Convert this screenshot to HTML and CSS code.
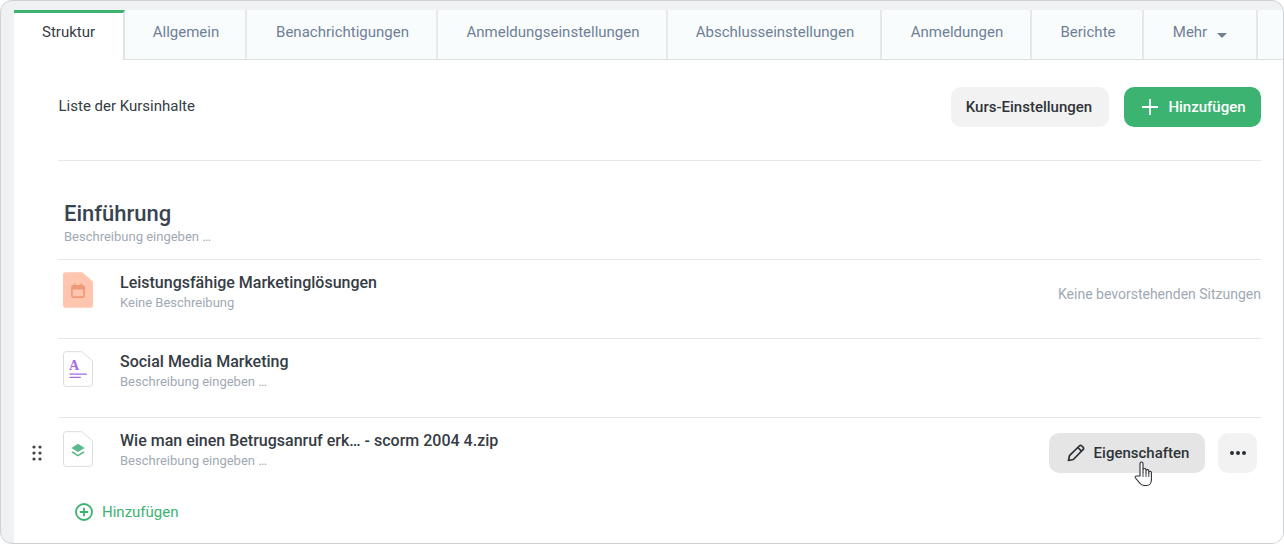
FILE: index.html
```html
<!DOCTYPE html>
<html lang="de">
<head>
<meta charset="utf-8">
<title>Kursinhalte</title>
<link rel="stylesheet" href="styles.css">
</head>
<body>
<div class="frame">
  <nav class="tabs">
    <a class="tab active w110">Struktur</a>
    <a class="tab w123">Allgemein</a>
    <a class="tab w190">Benachrichtigungen</a>
    <a class="tab w230">Anmeldungseinstellungen</a>
    <a class="tab w215">Abschlusseinstellungen</a>
    <a class="tab w150">Anmeldungen</a>
    <a class="tab w112">Berichte</a>
    <a class="tab w114">Mehr <svg class="caret" width="10" height="5" viewBox="0 0 10 5"><path d="M0 0h10L5 5z" fill="#6f7f95"/></svg></a>
    <span class="tab-rest"></span>
  </nav>
  <main class="content">
    <header class="top">
      <h2 class="list-title">Liste der Kursinhalte</h2>
      <div class="top-actions">
        <button class="btn btn-grey">Kurs-Einstellungen</button>
        <button class="btn btn-green"><svg width="18" height="18" viewBox="0 0 18 18"><path d="M9 1v16M1 9h16" stroke="#fff" stroke-width="1.8" fill="none"/></svg>Hinzufügen</button>
      </div>
    </header>
    <section class="section">
      <h1 class="section-title">Einführung</h1>
      <p class="desc section-desc">Beschreibung eingeben …</p>
    </section>
    <div class="row">
      <svg class="file" width="30" height="36" viewBox="0 0 32 38">
        <path d="M3 0h17.500L32 10v25a3 3 0 0 1-3 3H3a3 3 0 0 1-3-3V3a3 3 0 0 1 3-3z" fill="#ffc5ae"/>
        <rect x="9.500" y="14.500" width="13" height="12" rx="1.500" fill="none" stroke="#ee9a78" stroke-width="1.800"/>
        <path d="M9.500 18.500h13V16a1.500 1.500 0 0 0-1.500-1.500H11A1.500 1.500 0 0 0 9.500 16z" fill="#ee9a78"/>
        <path d="M12.500 12v3.500M19.500 12v3.500" stroke="#ee9a78" stroke-width="1.600"/>
      </svg>
      <div class="info">
        <div class="name">Leistungsfähige Marketinglösungen</div>
        <p class="desc">Keine Beschreibung</p>
      </div>
      <span class="note">Keine bevorstehenden Sitzungen</span>
    </div>
    <div class="row">
      <svg class="file" width="30" height="36" viewBox="0 0 32 38">
        <path d="M3.500.5h16.500L31.500 10.500V34.500a3 3 0 0 1-3 3h-25a3 3 0 0 1-3-3V3.500a3 3 0 0 1 3-3z" fill="#fff" stroke="#d8dbde"/>
        <text class="file-letter" x="6.500" y="20.500">A</text>
        <path d="M7 24.500h18.500M7 28h12" stroke="#a56be0" stroke-width="1.400"/>
      </svg>
      <div class="info">
        <div class="name">Social Media Marketing</div>
        <p class="desc">Beschreibung eingeben …</p>
      </div>
    </div>
    <div class="row">
      <svg class="drag" width="10" height="16" viewBox="0 0 10 16"><g fill="#3d4349"><circle cx="2" cy="2" r="1.600"/><circle cx="8" cy="2" r="1.600"/><circle cx="2" cy="8" r="1.600"/><circle cx="8" cy="8" r="1.600"/><circle cx="2" cy="14" r="1.600"/><circle cx="8" cy="14" r="1.600"/></g></svg>
      <svg class="file" width="30" height="36" viewBox="0 0 32 38">
        <path d="M3.500.5h16.500L31.500 10.500V34.500a3 3 0 0 1-3 3h-25a3 3 0 0 1-3-3V3.500a3 3 0 0 1 3-3z" fill="#fff" stroke="#d8dbde"/>
        <path d="M16 13.500L23 18l-7 4.300L9 18z" fill="#5cb98a"/>
        <path d="M10.300 21.500l5.700 3.500 5.700-3.500L23 22.600l-7 4.500-7-4.500z" fill="#5cb98a"/>
      </svg>
      <div class="info">
        <div class="name">Wie man einen Betrugsanruf erk… - scorm 2004 4.zip</div>
        <p class="desc">Beschreibung eingeben …</p>
      </div>
      <div class="row-actions">
        <button class="btn btn-hover"><svg width="18" height="18" viewBox="0 0 18 18"><path d="M1.500 16.500l1-4.800L12.300 2a1.800 1.800 0 0 1 2.500 0l1.200 1.200a1.800 1.800 0 0 1 0 2.500L6.300 15.500zM10.800 3.500l3.700 3.700" fill="none" stroke="#2b3035" stroke-width="1.700" stroke-linejoin="round"/></svg>Eigenschaften</button>
        <button class="btn btn-more" aria-label="Mehr"><svg width="16" height="4" viewBox="0 0 16 4"><g fill="#2b3035"><circle cx="2" cy="2" r="2"/><circle cx="8" cy="2" r="2"/><circle cx="14" cy="2" r="2"/></g></svg></button>
      </div>
      <svg class="cursor" width="20" height="26" viewBox="0 0 20 26"><path d="M6 15V2.500a1.500 1.500 0 0 1 3 0V11V9a1.500 1.500 0 0 1 3 0v3V10a1.400 1.400 0 0 1 2.800 0v2.500V11.500a1.300 1.300 0 0 1 2.600 0V19c0 3-2 5.500-5 5.500H10c-2 0-3-.8-4-2.200L1.500 17c-.8-1 0-2.300 1.300-2z" fill="#fff" stroke="#2b2f33" stroke-width="1.100" stroke-linejoin="round"/><path d="M9 11v5M12 12v4M14.800 12.500v3.500" stroke="#2b2f33" stroke-width=".9"/></svg>
    </div>
    <a class="add">
      <svg width="18" height="18" viewBox="0 0 18 18"><circle cx="9" cy="9" r="8" fill="none" stroke="#3cb371" stroke-width="1.800"/><path d="M9 4.800v8.400M4.800 9h8.400" stroke="#3cb371" stroke-width="1.800"/></svg>
      Hinzufügen
    </a>
  </main>
</div>
</body>
</html>
```

FILE: styles.css
```css
* { box-sizing: border-box; }
html, body { margin: 0; height: 544px; overflow: hidden; background: #fff; }
body { font-family: Roboto, "Liberation Sans", sans-serif; color: #363c44; }
.frame {
  width: 1284px;
  height: 544px;
  border: 1px solid #cfd2d5;
  border-radius: 12px;
  background: #eff1f3;
  padding: 9px 0 0 13px;
  overflow: hidden;
}
.tabs { display: flex; height: 50px; background: #f9fcfd; border-bottom: 1px solid #dcdee0; }
.tab {
  display: flex;
  align-items: center;
  justify-content: center;
  gap: 10px;
  flex: none;
  font-size: 15px;
  color: #6f7f95;
  border-right: 2px solid #e6e8ea;
  padding: 0 0 6px 2px;
}
.tab.active {
  color: #363c44;
  background: #fff;
  border-top: 3px solid #3cb371;
  border-right: 2px solid #e0e2e4;
  height: 50px;
  padding: 0 0 10px 0;
}
.w110 { width: 111px; }
.w123 { width: 122px; }
.w190 { width: 191px; }
.w230 { width: 230px; }
.w215 { width: 214px; }
.w150 { width: 150px; }
.w112 { width: 112px; }
.w114 { width: 114px; padding-left: 0; }
.tab-rest { flex: 1; }
.caret { margin-top: 7px; }
.content { background: #fff; height: 484px; padding: 27px 22px 0 44px; }
.top { display: flex; justify-content: space-between; height: 74px; border-bottom: 1px solid #e6e8ea; }
.list-title { margin: 10px 0 0 .5px; font-size: 15px; font-weight: 400; color: #363c44; line-height: 18px; }
.top-actions { display: flex; gap: 15px; align-items: flex-start; }
.btn {
  display: flex;
  align-items: center;
  justify-content: center;
  height: 40px;
  border: 0;
  border-radius: 10px;
  font: 500 15px Roboto, sans-serif;
  padding: 0;
}
.btn-grey { width: 158px; padding-right: 2px; background: #f2f2f2; color: #2f3438; }
.btn-green { width: 137px; gap: 9px; padding-left: 2px; background: #3cb371; color: #fff; }
.section { padding: 40px 0 14px 6px; border-bottom: 1px solid #e6e8ea; }
.section-title { margin: 0; font-size: 22px; font-weight: 500; line-height: 25px; color: #3a4350; }
.desc { margin: 0; font-size: 13px; line-height: 16px; color: #9fa9b5; }
.section-desc { margin-top: 3px; }
.row { position: relative; display: flex; align-items: center; height: 79px; padding-left: 5px; border-bottom: 1px solid #e6e8ea; padding-bottom: 16px; }
.row:last-of-type { border-bottom: 0; }
.row:not(:last-of-type) .info { padding-top: 2px; }
.file { flex: none; margin: -2px 27px 0 0; }
.file-letter { font: 700 15px "Liberation Serif", serif; fill: #a56be0; }
.info { flex: 1; }
.name { font-size: 16px; font-weight: 500; line-height: 19px; color: #363c44; margin-bottom: 3px; }
.note { font-size: 14px; color: #9fa9b5; margin-top: 6px; }
.drag { position: absolute; left: -26px; top: 27px; }
.row-actions { display: flex; gap: 13px; margin-right: 4px; margin-top: 6px; }
.btn-hover { width: 156px; gap: 9px; padding-left: 2px; background: #e5e5e5; color: #2f3438; }
.btn-more { width: 39px; background: #f2f2f2; }
.cursor { position: absolute; right: 107px; top: 43px; }
.add { display: flex; align-items: center; gap: 9px; margin: 0 0 0 17px; font-size: 15px; color: #3cb371; height: 30px; }
```
